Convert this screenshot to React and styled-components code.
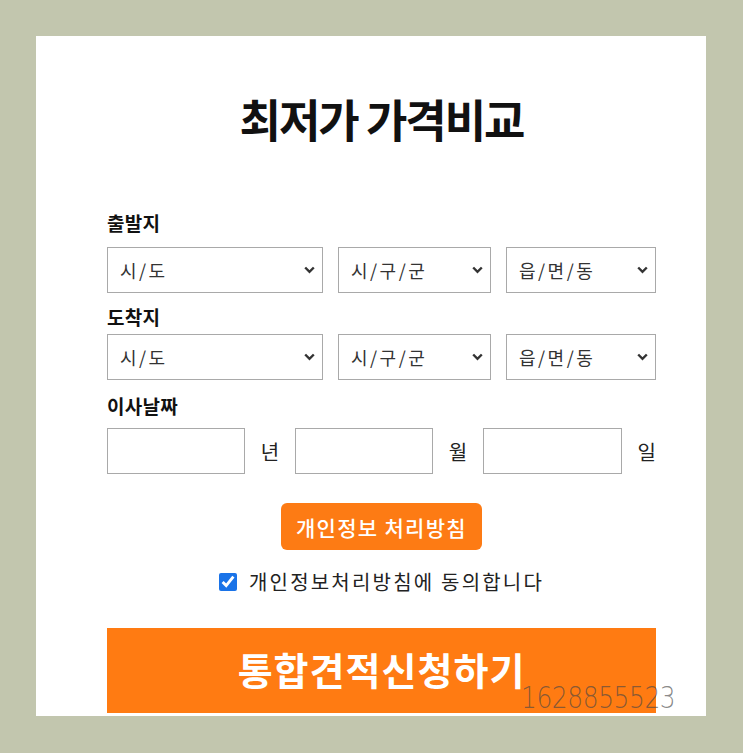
import React from "react";
import styled, { createGlobalStyle } from "styled-components";

const Global = createGlobalStyle`
  html, body { margin: 0; padding: 0; }
  body {
    background: #c2c6ae;
    font-family: "Noto Sans CJK KR", "Noto Sans", sans-serif;
  }
`;

const Page = styled.div`
  position: relative;
  width: 743px;
  height: 753px;
  padding: 36px 37px 37px 36px;
  box-sizing: border-box;
  background: #c2c6ae;
`;

const Card = styled.div`
  width: 670px;
  height: 680px;
  background: #fff;
  box-sizing: border-box;
  padding: 58px 50px 0 71px;
  overflow: hidden;
  display: flex;
  flex-direction: column;
`;

const Title = styled.h1`
  margin: 0;
  text-align: center;
  font-size: 45px;
  line-height: 50px;
  font-weight: 700;
  letter-spacing: -2px;
  color: #111;
`;

const Label = styled.div`
  margin-top: ${(p) => p.$mt}px;
  font-size: 19px;
  line-height: 26px;
  font-weight: 700;
  letter-spacing: 0.3px;
  color: #111;
`;

const SelectRow = styled.div`
  margin-top: ${(p) => p.$mt}px;
  display: flex;
  gap: 15px;
`;

const SelectWrap = styled.div`
  position: relative;
  width: ${(p) => p.$w}px;
  height: 46px;
`;

const Select = styled.select`
  appearance: none;
  -webkit-appearance: none;
  width: 100%;
  height: 100%;
  box-sizing: border-box;
  border: 1px solid #a9a9a9;
  border-radius: 0;
  background: #fff;
  padding: 0 30px 0 12px;
  font-family: "Noto Sans CJK KR", sans-serif;
  font-size: 18px;
  letter-spacing: 2.5px;
  color: #333;
  outline: none;
`;

const Chevron = styled.svg`
  position: absolute;
  right: 8px;
  top: 50%;
  transform: translateY(-50%);
  width: 11px;
  height: 8px;
  pointer-events: none;
`;

const DateRow = styled.div`
  margin-top: 9px;
  display: flex;
  align-items: center;
  justify-content: space-between;
`;

const DateInput = styled.input`
  width: ${(p) => p.$w}px;
  height: 46px;
  box-sizing: border-box;
  border: 1px solid #a9a9a9;
  border-radius: 0;
  padding: 0 8px;
  font-size: 17px;
  outline: none;
`;

const Unit = styled.span`
  font-size: 20px;
  color: #222;
`;

const Center = styled.div`
  display: flex;
  justify-content: center;
  align-items: center;
  margin-top: ${(p) => p.$mt}px;
`;

const PolicyButton = styled.button`
  width: 201px;
  height: 47px;
  border: none;
  border-radius: 6px;
  background: #fd7b14;
  color: #fff;
  font-family: "Noto Sans CJK KR", sans-serif;
  font-size: 21px;
  font-weight: 500;
  letter-spacing: 1.3px;
  padding: 0;
`;

const Agree = styled.label`
  display: flex;
  align-items: center;
  gap: 12px;
  font-size: 20px;
  line-height: 24px;
  color: #222;
  letter-spacing: 2.2px;
`;

const Check = styled.input`
  width: 18px;
  height: 18px;
  margin: 0;
  accent-color: #1a73e8;
`;

const SubmitButton = styled.button`
  margin-top: 34px;
  width: 549px;
  height: 85px;
  flex-shrink: 0;
  border: none;
  background: #ff7b12;
  color: #fff;
  font-family: "Noto Sans CJK KR", sans-serif;
  font-size: 38px;
  font-weight: 700;
  letter-spacing: 1px;
  padding: 0 0 4px;
`;

const Watermark = styled.div`
  position: absolute;
  left: 521px;
  top: 680px;
  font-family: "DejaVu Sans", sans-serif;
  font-weight: 200;
  font-size: 30px;
  line-height: 36px;
  color: rgba(70, 70, 70, 0.65);
  transform: scaleX(0.83);
  transform-origin: left center;
  letter-spacing: -0.5px;
`;

const Arrow = () => (
  <Chevron viewBox="0 0 11 8">
    <path d="M1.2 1.5 L5.5 5.8 L9.8 1.5" fill="none" stroke="#333" strokeWidth="2.4" />
  </Chevron>
);

const Selects = ({ mt }) => (
  <SelectRow $mt={mt}>
    <SelectWrap $w={216}>
      <Select defaultValue="">
        <option value="">시/도</option>
      </Select>
      <Arrow />
    </SelectWrap>
    <SelectWrap $w={153}>
      <Select defaultValue="">
        <option value="">시/구/군</option>
      </Select>
      <Arrow />
    </SelectWrap>
    <SelectWrap $w={150}>
      <Select defaultValue="">
        <option value="">읍/면/동</option>
      </Select>
      <Arrow />
    </SelectWrap>
  </SelectRow>
);

export default function App() {
  return (
    <>
      <Global />
      <Page>
        <Card>
          <Title>최저가 가격비교</Title>
          <Label $mt={66}>출발지</Label>
          <Selects mt={11} />
          <Label $mt={11}>도착지</Label>
          <Selects mt={4} />
          <Label $mt={13}>이사날짜</Label>
          <DateRow>
            <DateInput $w={138} />
            <Unit>년</Unit>
            <DateInput $w={138} />
            <Unit>월</Unit>
            <DateInput $w={139} />
            <Unit>일</Unit>
          </DateRow>
          <Center $mt={29}>
            <PolicyButton>개인정보 처리방침</PolicyButton>
          </Center>
          <Center $mt={20}>
            <Agree>
              <Check type="checkbox" defaultChecked />
              개인정보처리방침에 동의합니다
            </Agree>
          </Center>
          <SubmitButton>통합견적신청하기</SubmitButton>
        </Card>
        <Watermark>1628855523</Watermark>
      </Page>
    </>
  );
}
